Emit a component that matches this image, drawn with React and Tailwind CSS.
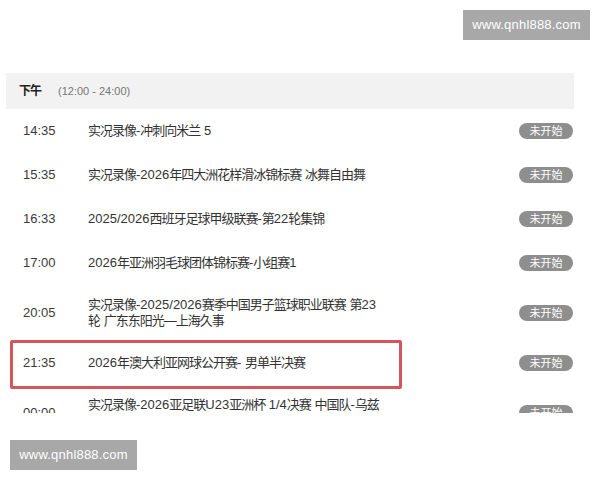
import React from "react";

const rows = [
  { time: "14:35", title: ["实况录像-冲刺向米兰 5"] },
  { time: "15:35", title: ["实况录像-2026年四大洲花样滑冰锦标赛 冰舞自由舞"] },
  { time: "16:33", title: ["2025/2026西班牙足球甲级联赛-第22轮集锦"] },
  { time: "17:00", title: ["2026年亚洲羽毛球团体锦标赛-小组赛1"] },
  {
    time: "20:05",
    title: ["实况录像-2025/2026赛季中国男子篮球职业联赛 第23", "轮 广东东阳光—上海久事"],
  },
  { time: "21:35", title: ["2026年澳大利亚网球公开赛- 男单半决赛"], marked: true },
  {
    time: "00:00",
    title: ["实况录像-2026亚足联U23亚洲杯 1/4决赛 中国队-乌兹", "别克斯坦队"],
  },
];

// han glyphs sit a little tighter than latin in the source
const Line = ({ text }) => {
  const parts = text.split(/([\u2014\u3000-\u9fff\uff00-\uffef]+)/);
  return (
    <div>
      {parts.map((p, i) =>
        i % 2 === 1 ? (
          <span key={i} className="tracking-[-1px]">
            {p}
          </span>
        ) : (
          <span key={i}>{p}</span>
        )
      )}
    </div>
  );
};

const Watermark = () => (
  <div className="w-[127px] h-[30px] bg-[#a8a8a8] flex items-center justify-center text-white text-[13px] tracking-[0.2px]">
    www.qnhl888.com
  </div>
);

const Row = ({ row }) => {
  const tall = row.title.length > 1;
  return (
    <div
      className={`relative flex items-center ${tall ? "h-[56px]" : "h-[44px]"}`}
    >
      <div className="w-[82px] pl-[17px] shrink-0 text-[13px] text-[#3a3a3a]">
        {row.time}
      </div>
      <div className="w-[431px] shrink-0 text-[13px] leading-[16px] text-[#333]">
        {row.title.map((line, i) => (
          <Line key={i} text={line} />
        ))}
      </div>
      <div className="w-[54px] h-[16px] rounded-full bg-[#8e8e8e] text-white text-[11px] leading-[16px] text-center">
        未开始
      </div>
      {row.marked && (
        <div className="absolute left-[4px] top-[-1px] w-[392px] h-[49px] border-[3px] border-[#d4565c] rounded-[2px]" />
      )}
    </div>
  );
};

export default function App() {
  return (
    <div
      className="w-[600px] h-[480px] bg-white overflow-hidden"
      style={{ fontFamily: "'Liberation Sans', 'Noto Sans CJK SC', sans-serif" }}
    >
      <div className="flex justify-end pt-[10px] pr-[10px]">
        <Watermark />
      </div>
      <div className="mt-[33px] mx-[6px] w-[568px] h-[36px] bg-[#f2f2f2] flex items-center pl-[13px]">
        <span className="text-[12px] font-bold text-[#222] tracking-[-1px]">下午</span>
        <span className="ml-[17px] text-[11px] text-[#777]">(12:00 - 24:00)</span>
      </div>
      <div className="mx-[6px] h-[304px] overflow-hidden">
        {rows.map((row) => (
          <Row key={row.time} row={row} />
        ))}
      </div>
      <div className="mt-[27px] ml-[10px]">
        <Watermark />
      </div>
    </div>
  );
}
